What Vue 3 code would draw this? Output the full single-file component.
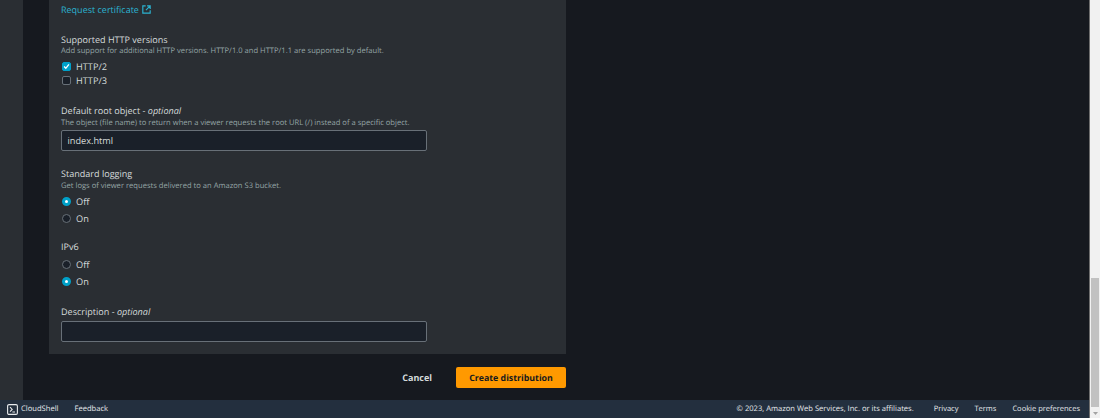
<script setup>
const httpVersions = [
  { label: 'HTTP/2', checked: true },
  { label: 'HTTP/3', checked: false }
]
const logging = [
  { label: 'Off', checked: true },
  { label: 'On', checked: false }
]
const ipv6 = [
  { label: 'Off', checked: false },
  { label: 'On', checked: true }
]
</script>

<template>
  <div class="page">
    <div class="window">
      <main class="main">
        <div class="nav"></div>
        <div class="content">
          <section class="card">
            <a class="link">Request certificate
              <svg class="ext" viewBox="0 0 11 11" width="11" height="11" fill="none" stroke="currentColor" stroke-width="1.4">
                <path d="M4.5 1H1v9h9V6.5" />
                <path d="M6.2 1H10v3.8M10 1 4.8 6.2" />
              </svg>
            </a>

            <div class="field http">
              <div class="label">Supported HTTP versions</div>
              <div class="desc">Add support for additional HTTP versions. HTTP/1.0 and HTTP/1.1 are supported by default.</div>
              <div class="checks">
                <div v-for="item in httpVersions" :key="item.label" class="check-row">
                  <span class="box" :class="{ on: item.checked }">
                    <svg v-if="item.checked" viewBox="0 0 9 9" width="9" height="9" fill="none" stroke="#fff" stroke-width="1.7">
                      <path d="M1.4 4.6 3.6 6.8 7.6 1.8" />
                    </svg>
                  </span>
                  <span class="opt">{{ item.label }}</span>
                </div>
              </div>
            </div>

            <div class="field root">
              <div class="label">Default root object - <i>optional</i></div>
              <div class="desc">The object (file name) to return when a viewer requests the root URL (/) instead of a specific object.</div>
              <div class="input">index.html</div>
            </div>

            <div class="field logging">
              <div class="label">Standard logging</div>
              <div class="desc">Get logs of viewer requests delivered to an Amazon S3 bucket.</div>
              <div class="radios">
                <div v-for="item in logging" :key="item.label" class="radio-row">
                  <span class="radio" :class="{ on: item.checked }"></span>
                  <span class="opt">{{ item.label }}</span>
                </div>
              </div>
            </div>

            <div class="field ipv6">
              <div class="label">IPv6</div>
              <div class="radios">
                <div v-for="item in ipv6" :key="item.label" class="radio-row">
                  <span class="radio" :class="{ on: item.checked }"></span>
                  <span class="opt">{{ item.label }}</span>
                </div>
              </div>
            </div>

            <div class="field description">
              <div class="label">Description - <i>optional</i></div>
              <div class="input empty"></div>
            </div>
          </section>

          <div class="actions">
            <span class="cancel">Cancel</span>
            <span class="primary">Create distribution</span>
          </div>
        </div>
      </main>

      <footer class="footer">
        <div class="foot-left">
          <svg class="shell" viewBox="0 0 11 11" width="11" height="11" fill="none" stroke="#e6e9ec">
            <rect x=".6" y=".6" width="9.8" height="9.8" rx="1.4" stroke-width="1.1" />
            <path d="M3 3.2 5.2 5.4 3 7.6M5.4 8h2.6" stroke-width="1.1" />
          </svg>
          <span class="cloud">CloudShell</span>
          <span class="feedback">Feedback</span>
        </div>
        <div class="foot-right">
          <span class="copy">© 2023, Amazon Web Services, Inc. or its affiliates.</span>
          <span>Privacy</span>
          <span>Terms</span>
          <span>Cookie preferences</span>
        </div>
      </footer>
    </div>

    <div class="scrollbar">
      <div class="thumb"></div>
      <svg class="arrow" viewBox="0 0 5 3" width="5" height="3"><path d="M0 0h5L2.5 3z" fill="#a3a3a3" /></svg>
    </div>
  </div>
</template>

<style>
html, body { margin: 0; background: #16191f; }
</style>

<style scoped>
.page {
  width: 1100px;
  height: 418px;
  display: flex;
  overflow: hidden;
  font-family: "Open Sans", "Noto Sans", sans-serif;
  text-rendering: geometricPrecision;
  color: #d5dbdb;
}
.window {
  flex: 1;
  min-width: 0;
  display: flex;
  flex-direction: column;
}
.main {
  flex: 1;
  display: flex;
  min-height: 0;
  background: #16191f;
}
.nav {
  width: 23px;
  background: #2a2e33;
}
.content {
  width: 517px;
  margin-left: 26px;
}
.card {
  height: 354px;
  box-sizing: border-box;
  background: #2a2e33;
  padding: 3px 12px 0;
  display: flex;
  flex-direction: column;
  align-items: flex-start;
}
.link {
  color: #2bb3d1;
  font-size: 9px;
  line-height: 13px;
  display: flex;
  align-items: center;
  gap: 3px;
}
.ext { width: 9px; height: 9px; }
.field { width: 100%; }
.label {
  font-size: 9.05px;
  line-height: 13px;
  color: #d5dbdb;
}
.desc {
  margin-top: 1px;
  font-size: 7.6px;
  line-height: 11px;
  color: #95a5a6;
}
.http { margin-top: 17px; }
.http .desc { margin-top: 0; }
.checks { margin-top: 4px; display: flex; flex-direction: column; gap: 3px; }
.check-row, .radio-row {
  display: flex;
  align-items: center;
  height: 11px;
}
.box {
  width: 9px;
  height: 9px;
  box-sizing: border-box;
  border: 1px solid #687078;
  border-radius: 2px;
  background: #1a2029;
  margin: 0 5.5px 0 0.5px;
  display: flex;
  align-items: center;
  justify-content: center;
}
.box.on { background: #00a1c9; border-color: #00a1c9; }
.opt { font-size: 9.2px; line-height: 11px; color: #d5dbdb; }
.root { margin-top: 18px; }
.input {
  margin-top: 0.5px;
  width: 365.5px;
  height: 21px;
  box-sizing: border-box;
  border: 1px solid #687078;
  border-radius: 2px;
  background: #1a2029;
  font-size: 9.2px;
  line-height: 19px;
  padding-left: 5.5px;
  color: #d5dbdb;
}
.logging { margin-top: 16px; }
.radios { margin-top: 4px; display: flex; flex-direction: column; gap: 6px; }
.radio {
  width: 9px;
  height: 9px;
  box-sizing: border-box;
  border: 1px solid #687078;
  border-radius: 50%;
  background: #1a2029;
  margin: 0 5.5px 0 0.5px;
}
.radio.on { border: 3px solid #00a1c9; background: #fff; }
.ipv6 { margin-top: 16px; }
.ipv6 .radios { margin-top: 6px; }
.description { margin-top: 18px; }
.description .input { margin-top: 3px; }
.actions {
  display: flex;
  justify-content: flex-end;
  align-items: center;
  margin-top: 13px;
}
.cancel {
  font-size: 9px;
  font-weight: 700;
  color: #d5dbdb;
  margin-right: 24px;
}
.primary {
  width: 110px;
  height: 21px;
  box-sizing: border-box;
  background: #ff9900;
  border-radius: 2px;
  font-size: 8.8px;
  font-weight: 700;
  color: #16191f;
  display: flex;
  align-items: center;
  justify-content: center;
}
.footer {
  height: 18px;
  background: #232f3e;
  color: #e6e9ec;
  font-size: 7.5px;
  display: flex;
  justify-content: space-between;
  align-items: center;
}
.foot-left { display: flex; align-items: center; padding-left: 7px; }
.cloud { margin-left: 3px; font-size: 7.6px; }
.feedback { margin-left: 16px; font-size: 7.6px; }
.foot-right { display: flex; gap: 16px; padding-right: 9px; }
.copy { margin-right: 4px; font-size: 7.6px; }
.scrollbar {
  width: 11px;
  position: relative;
  background: #f1f1f1;
  border-left: 1px solid #6e6e6e;
  box-sizing: border-box;
}
.thumb {
  position: absolute;
  left: 1px;
  right: 1px;
  top: 278px;
  height: 129px;
  background: #c1c1c1;
}
.arrow { position: absolute; left: 3px; bottom: 3px; }
</style>
